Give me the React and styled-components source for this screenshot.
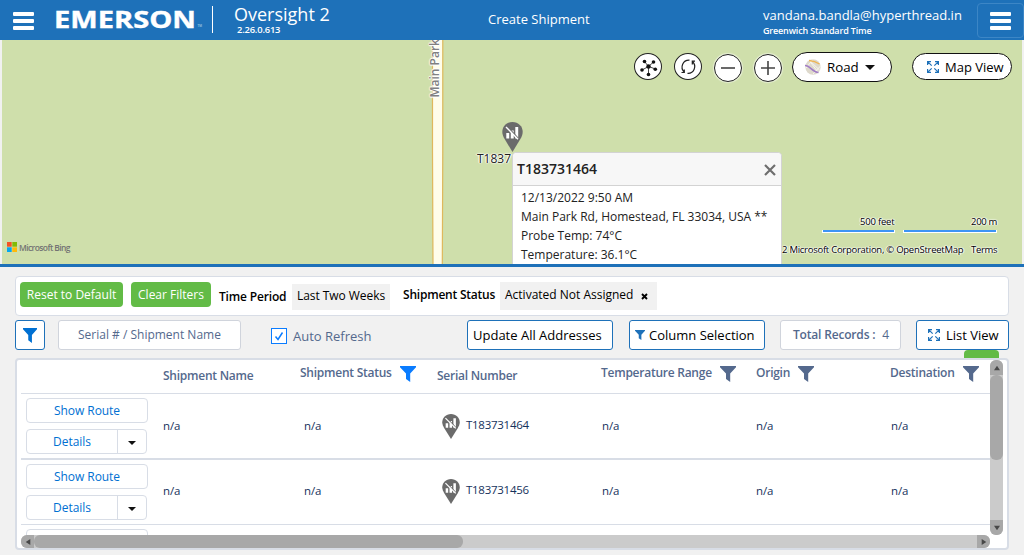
import React from "react";
import styled, { createGlobalStyle } from "styled-components";

const Global = createGlobalStyle`
  * { box-sizing: border-box; }
  html, body { margin: 0; height: 100%; overflow: hidden; background: #f1f1f1; }
  body { font-family: "Open Sans", "Noto Sans", sans-serif; font-size: 13px; color: #000; }
`;

const Page = styled.div`
  width: 1024px;
  height: 555px;
  display: flex;
  flex-direction: column;
  overflow: hidden;
`;

const Text = styled.span`
  display: block;
  flex: none;
  white-space: nowrap;
  font-size: ${(p) => p.$size || 13}px;
  font-weight: ${(p) => p.$weight || 400};
  letter-spacing: ${(p) => p.$ls || 0}px;
  line-height: ${(p) => p.$lh || 18}px;
  color: ${(p) => p.$color || "inherit"};
`;

/* ---------- header ---------- */

const Header = styled.header`
  height: 40px;
  flex: none;
  display: flex;
  align-items: flex-start;
  background: #1e71b9;
  color: #fff;
`;

const Burger = styled.span`
  display: flex;
  flex-direction: column;
  gap: 3px;
  width: 21px;
  i { display: block; height: 4px; border-radius: 1px; background: #fff; }
`;

const MenuButton = styled.div`
  flex: none;
  margin: 12px 0 0 13px;
  width: 42px;
`;

const Logo = styled.svg`
  width: 149px;
  height: 40px;
  flex: none;
`;

const Divider = styled.div`
  flex: none;
  width: 1px;
  height: 27px;
  margin: 6px 0 0 8px;
  background: #fff;
`;

const Product = styled.div`
  flex: none;
  width: 254px;
  padding: 2px 0 0 21px;
`;

const Version = styled.div`
  margin: -1px 0 0 3px;
`;

const PageTitle = styled.div`
  flex: none;
  width: 296px;
  padding: 10px 0 0 21px;
`;

const Account = styled.div`
  flex: none;
  width: 214px;
  padding-top: 6px;
`;

const AccountMenu = styled.div`
  flex: none;
  width: 47px;
  height: 35px;
  margin-top: 3px;
  border: 1px solid #3c86c6;
  border-radius: 4px;
  padding: 8px 0 0 12px;
`;

/* ---------- map ---------- */

const MapPane = styled.section`
  position: relative;
  flex: none;
  height: 224px;
  margin: 0 2px;
  overflow: hidden;
  background: #cfdfab;
`;

const MapBorder = styled.div`
  flex: none;
  height: 3px;
  background: #1e71b9;
`;

const Placed = styled.div`
  position: absolute;
  left: ${(p) => p.$x}px;
  top: ${(p) => p.$y}px;
`;

const RoadLine = styled.svg`
  position: absolute;
  left: 426px;
  top: 0;
`;

const RoadName = styled(Placed)`
  writing-mode: vertical-rl;
  transform: rotate(180deg);
  text-shadow: 0 0 2px #fff, 0 0 2px #fff, 0 0 1px #fff, 1px 0 1px #fff, -1px 0 1px #fff;
`;

const Halo = styled.div`
  text-shadow: 0 0 2px #fff, 0 0 2px #fff, 1px 0 1px #fff, -1px 0 1px #fff;
`;

const MapControls = styled.div`
  position: absolute;
  left: 632px;
  top: 12px;
  display: flex;
  align-items: flex-start;
`;

const RoundButton = styled.div`
  flex: none;
  width: 28px;
  height: ${(p) => (p.$glow ? 28 : 27)}px;
  margin: ${(p) => (p.$glow ? 2 : 1)}px 12px 0 0;
  border: 1px solid #222;
  border-radius: 50%;
  background: #fff;
  box-shadow: ${(p) => (p.$glow ? "0 0 1px 1px rgba(255,255,255,.5)" : "none")};
  svg { display: block; }
`;

const Pill = styled.div`
  display: flex;
  flex: none;
  align-items: center;
  gap: ${(p) => p.$gap}px;
  width: 100px;
  height: ${(p) => p.$h}px;
  margin: ${(p) => p.$m};
  padding-left: ${(p) => p.$pl}px;
  border: 1px solid #111;
  border-radius: 15px;
  background: #fff;
`;

const Caret = styled.span`
  display: block;
  flex: none;
  width: 0;
  height: 0;
  border: ${(p) => p.$s || 5}px solid transparent;
  border-top-color: #111;
  border-bottom: 0;
`;

const InfoBox = styled.div`
  position: absolute;
  left: 510px;
  top: 112px;
  width: 270px;
  height: 140px;
  border: 1px solid #d3d3d3;
  border-radius: 4px;
  background: #fff;
  color: #222;
`;

const InfoHead = styled.div`
  display: flex;
  justify-content: space-between;
  height: 33px;
  padding: 7px 5px 0 4px;
  border-bottom: 1px solid #d3d3d3;
  border-radius: 4px 4px 0 0;
  background: #f7f7f7;
  svg { margin-top: 4px; }
`;

const InfoBody = styled.div`
  padding: 2px 0 0 8px;
`;

const ScaleBar = styled.div`
  width: ${(p) => p.$w}px;
  height: 3px;
  border: 1px solid #fff;
  border-top-width: 0;
  background: #3d94f5;
`;

/* ---------- filters and toolbar ---------- */

const FilterBar = styled.div`
  flex: none;
  display: flex;
  align-items: flex-start;
  height: 40px;
  margin: 9px 15px 0;
  padding: 5px 0 0 4px;
  border: 1px solid #d8dde6;
  border-radius: 4px;
  background: #fff;
`;

const GreenButton = styled.div`
  display: flex;
  justify-content: center;
  align-items: center;
  width: ${(p) => p.$w}px;
  height: 25px;
  margin-right: 8px;
  border-radius: 4px;
  background: #62bb46;
  color: #fff;
`;

const FilterLabel = styled.div`
  width: ${(p) => p.$w}px;
  padding-top: ${(p) => p.$pt}px;
`;

const Tag = styled.div`
  display: flex;
  align-items: center;
  gap: 8px;
  width: ${(p) => p.$w}px;
  height: ${(p) => p.$h}px;
  margin: ${(p) => p.$m};
  padding: 0 0 2px 5px;
  background: #f1f1f1;
  svg { margin-top: 3px; }
`;

const Toolbar = styled.div`
  flex: none;
  display: flex;
  height: 30px;
  margin: 4px 15px 0;
`;

const Box = styled.div`
  display: flex;
  flex: none;
  align-items: center;
  gap: ${(p) => p.$gap || 0}px;
  width: ${(p) => p.$w}px;
  height: 30px;
  margin-right: ${(p) => p.$mr || 0}px;
  padding-left: ${(p) => p.$pl || 0}px;
  border: 1px solid ${(p) => (p.$plain ? "#d0d4dc" : "#1e71b9")};
  border-radius: 3px;
  background: #fff;
`;

const CheckField = styled.div`
  display: flex;
  flex: none;
  width: 196px;
  gap: 6px;
  padding-top: 8px;
`;

const CheckBox = styled.div`
  width: 16px;
  height: 16px;
  border: 1px solid #0a7cff;
  background: #fff;
  svg { display: block; }
`;

const GreenTab = styled.div`
  flex: none;
  width: 35px;
  height: 8px;
  margin-left: 964px;
  border-radius: 4px 4px 0 0;
  background: #62bb46;
`;

/* ---------- grid ---------- */

const TableFrame = styled.div`
  flex: none;
  display: grid;
  grid-template-columns: 969px 13px;
  grid-template-rows: 175px 13px;
  width: 994px;
  height: 192px;
  margin-left: 15px;
  padding-left: 4px;
  border: 2px solid #d8dde6;
  border-radius: 4px;
  background: #fff;
`;

const Rows = styled.div`
  overflow: hidden;
`;

const columns = "142px 137px 137px 164px 155px 134px 100px";

const HeadRow = styled.div`
  display: grid;
  grid-template-columns: ${columns};
  height: 34px;
  border-bottom: 1px solid #d8dde6;
  color: #54698d;
`;

const HeadCell = styled.div`
  display: flex;
  gap: 8px;
  padding-top: ${(p) => (p.$filter ? 4 : 7)}px;
  svg { margin-top: 2px; }
`;

const Row = styled.div`
  display: grid;
  grid-template-columns: ${columns};
  height: ${(p) => (p.$thick ? 66 : 65)}px;
  border-bottom: ${(p) => (p.$thick ? 2 : 1)}px solid #d8dde6;
  color: #16325c;
`;

const Actions = styled.div`
  display: flex;
  flex-direction: column;
  gap: 6px;
  padding: 4px 0 0 5px;
`;

const RowButton = styled.div`
  display: flex;
  flex: none;
  align-items: center;
  justify-content: center;
  width: 122px;
  height: 25px;
  border: 1px solid #d8dde6;
  border-radius: 4px;
  color: #0070d2;
`;

const SplitButton = styled.div`
  display: flex;
  flex: none;
  width: 121px;
  height: 25px;
  border: 1px solid #d8dde6;
  border-radius: 4px;
  color: #0070d2;
  > div { display: flex; align-items: center; justify-content: center; }
  > div:first-child { width: 91px; border-right: 1px solid #d8dde6; }
  > div:last-child { flex: 1; padding-top: 3px; }
`;

const Cell = styled.div`
  display: flex;
  gap: 6px;
  padding: ${(p) => p.$pt || 23}px 0 0 ${(p) => p.$pl || 0}px;
`;

const VBar = styled.div`
  display: flex;
  flex-direction: column;
  border-radius: 6px;
  overflow: hidden;
  background: #cbcbcb;
  > i:nth-child(2) { height: 85px; background: #a8a8a8; border-radius: 6px; margin-bottom: auto; }
`;

const HBar = styled.div`
  display: flex;
  border-radius: 6px;
  overflow: hidden;
  background: #cbcbcb;
  > i:nth-child(2) { width: 429px; background: #a8a8a8; border-radius: 6px; margin-right: auto; }
`;

const Arrow = styled.span`
  display: flex;
  flex: none;
  align-items: center;
  justify-content: center;
  width: 13px;
  height: ${(p) => p.$h || 13}px;
  background: #a8a8a8;
  svg { transform: rotate(${(p) => p.$r || 0}deg); }
`;

const ScrollArrow = ({ r, h }) => (
  <Arrow $r={r} $h={h}>
    <svg width="8" height="6" viewBox="0 0 8 6"><path d="M1 5.3 4 .7 7 5.3Z" fill="#484848" /></svg>
  </Arrow>
);

const Bars = () => <Burger><i /><i /><i /></Burger>;

const Funnel = ({ w = 16, h = 16, color }) => (
  <svg width={w} height={h} viewBox="0 0 16 16" preserveAspectRatio="none">
    <path d="M0 0H16V1.2L10.2 7.5V16L6 13V7.5L0 1.2Z" fill={color} />
  </svg>
);

const Expand = () => (
  <svg width="12" height="12" viewBox="0 0 12 12" fill="none" stroke="#1e71b9" strokeWidth="1.2">
    <path d="M.6 4V.6H4M8 .6h3.4V4M11.4 8v3.4H8M4 11.4H.6V8M.8.8l3.9 3.9M11.2.8 7.3 4.7M11.2 11.2 7.3 7.3M.8 11.2l3.9-3.9" />
  </svg>
);

const Pin = ({ w, h }) => (
  <svg width={w} height={h} viewBox="0 0 21 30" preserveAspectRatio="none">
    <path d="M10.5 0C4.6 0 .3 4.4.3 10c0 2.5 1 4.8 2.2 6.8L10.5 30l8-13.2c1.2-2 2.2-4.3 2.2-6.8C20.7 4.4 16.4 0 10.5 0Z" fill="#6b6b6b" />
    <path d="M4.300 11h2.900v5.500H4.300ZM8.800 8.400h2.900v8.100H8.800ZM13.300 5h2.900v11.500h-2.900Z" fill="#fff" />
    <path d="M5.300 4.700 17.300 17.400" stroke="#6b6b6b" strokeWidth="1.300" />
    <path d="M4 5 16 17.300" stroke="#fff" strokeWidth="1.400" />
  </svg>
);

const rows = [
  { serial: "T183731464", thick: true },
  { serial: "T183731456", thick: false },
];

const heads = [
  { label: "Shipment Name" },
  { label: "Shipment Status", filter: "#0a7cff" },
  { label: "Serial Number" },
  { label: "Temperature Range", filter: "#54698d" },
  { label: "Origin", filter: "#54698d" },
  { label: "Destination", filter: "#54698d" },
];

const NA = ({ pl, pt }) => <Cell $pl={pl} $pt={pt}><Text $size={11.5} $ls={-0.1}>n/a</Text></Cell>;

const TableRow = ({ serial, thick }) => (
  <Row $thick={thick}>
    <Actions>
      <RowButton><Text $size={12} $ls={-0.05}>Show Route</Text></RowButton>
      <SplitButton>
        <div><Text $size={12} $ls={-0.05}>Details</Text></div>
        <div><Caret $s={4} /></div>
      </SplitButton>
    </Actions>
    <NA pt={thick ? 23 : 22} />
    <NA pt={thick ? 23 : 22} pl={4} />
    <Cell $pl={5} $pt={thick ? 20 : 19}>
      <Pin w={18} h={25} />
      <Text $size={11.5} $ls={-0.27} $lh={22}>{serial}</Text>
    </Cell>
    <NA pt={thick ? 23 : 22} pl={1} />
    <NA pt={thick ? 23 : 22} />
    <NA pt={thick ? 23 : 22} pl={1} />
  </Row>
);

export default function App() {
  return (
    <Page>
      <Global />
      <Header>
        <MenuButton><Bars /></MenuButton>
        <Logo viewBox="0 0 149 40">
          <text x="-1" y="27.500" fill="#fff" fontSize="23.500" fontWeight="700" stroke="#fff" strokeWidth=".4" textLength="142" lengthAdjust="spacingAndGlyphs">EMERSON</text>
          <text x="142.500" y="27" fill="#cfe0f0" fontSize="3">TM</text>
        </Logo>
        <Divider />
        <Product>
          <Text $size={18} $lh={24}>Oversight 2</Text>
          <Version><Text $size={9.4} $lh={10} $weight={600} $ls={-0.2}>2.26.0.613</Text></Version>
        </Product>
        <PageTitle><Text $size={13}>Create Shipment</Text></PageTitle>
        <Account>
          <Text $size={13}>vandana.bandla@hyperthread.in</Text>
          <Text $size={9} $lh={13} $weight={600} $ls={-0.17}>Greenwich Standard Time</Text>
        </Account>
        <AccountMenu><Bars /></AccountMenu>
      </Header>

      <MapPane>
        <RoadLine width="20" height="224">
          <path d="M5 0H14.500L14 224H5Z" fill="#fffdea" />
          <path d="M4.500 0V110L5 224M14.800 0V110L14.300 224" fill="none" stroke="#dfb85c" strokeWidth="1.200" />
        </RoadLine>
        <RoadName $x={424} $y={-1}>
          <Text $size={12} $weight={600} $color="#808080">Main Park</Text>
        </RoadName>
        <Placed $x={499.5} $y={82}><Pin w={21} h={30} /></Placed>
        <Placed $x={475} $y={110}><Halo><Text $size={12} $color="#222">T1837</Text></Halo></Placed>

        <MapControls>
          <RoundButton>
            <svg width="26" height="26" viewBox="0 0 26 26">
              <path d="M13.500 12.500 9.500 7.500M13.500 12.500l5-4.500M13.500 12.500l7 2.500M13.500 12.500v8M13.500 12.500 7 16" stroke="#333" strokeWidth=".9" />
              <g fill="#111">
                <circle cx="13.500" cy="12.500" r="2.200" /><circle cx="9.500" cy="7.500" r="1.800" /><circle cx="18.500" cy="8" r="1.800" />
                <circle cx="20.300" cy="15.300" r="1.800" /><circle cx="13.500" cy="20.500" r="1.800" /><circle cx="7" cy="16" r="1.800" />
              </g>
            </svg>
          </RoundButton>
          <RoundButton>
            <svg width="26" height="26" viewBox="0 0 26 26" fill="none" stroke="#222" strokeWidth="1.200">
              <path d="M14.500 6.200C8 5.800 4.500 13.500 9.300 18.200M12.500 19.300C19 19.700 22.200 12 17.300 7.300M17.300 10.500V7.200H20M9.300 15.500v3H6.500" />
            </svg>
          </RoundButton>
          <RoundButton $glow>
            <svg width="26" height="26"><path d="M6 13H20" stroke="#444" strokeWidth="1.600" /></svg>
          </RoundButton>
          <RoundButton $glow>
            <svg width="26" height="26"><path d="M6 13H20M13 6V20" stroke="#444" strokeWidth="1.600" /></svg>
          </RoundButton>
          <Pill $h={30} $m="0 20px 0 -2px" $pl={12} $gap={6}>
            <svg width="16" height="16" viewBox="0 0 16 16">
              <circle cx="8" cy="8" r="7.700" fill="#ded9cc" />
              <path d="M4 1 14.500 11M1 9 8 .5M8 15 15.500 7M6 4l7 9" stroke="#f8f5ec" strokeWidth="1" />
              <path d="M4 1.500Q10 2 14.500 5" fill="none" stroke="#efb553" strokeWidth="1.400" />
              <path d="M0 6.500C5 6 7 13 13.500 13.500" fill="none" stroke="#a07cc5" strokeWidth="1.600" />
            </svg>
            <Text $size={13.3} $lh={20}>Road</Text>
            <Caret />
          </Pill>
          <Pill $h={27} $m="1px 0 0 0" $pl={14} $gap={6}>
            <Expand />
            <Text $size={13}>Map View</Text>
          </Pill>
        </MapControls>

        <Placed $x={5} $y={202}>
          <svg width="10" height="10" display="block">
            <path d="M0 0H4.700V4.700H0Z" fill="#f35325" /><path d="M5.300 0H10V4.700H5.300Z" fill="#81bc06" />
            <path d="M0 5.300H4.700V10H0Z" fill="#05a6f0" /><path d="M5.300 5.300H10V10H5.300Z" fill="#ffba08" />
          </svg>
        </Placed>
        <Placed $x={17} $y={202}><Text $size={8.5} $lh={12} $weight={600} $color="#737373" $ls={-0.6}>Microsoft Bing</Text></Placed>

        <Placed $x={858} $y={175}><Halo><Text $size={9.5} $lh={14} $ls={-0.2}>500 feet</Text></Halo></Placed>
        <Placed $x={969} $y={175}><Halo><Text $size={9.5} $lh={14} $ls={-0.3}>200 m</Text></Halo></Placed>
        <Placed $x={820} $y={190}><ScaleBar $w={73} /></Placed>
        <Placed $x={901} $y={190}><ScaleBar $w={94} /></Placed>
        <Placed $x={780} $y={203}><Halo><Text $size={9.5} $lh={14} $ls={-0.26}>2 Microsoft Corporation, © OpenStreetMap</Text></Halo></Placed>
        <Placed $x={969} $y={203}><Halo><Text $size={9.5} $lh={14} $ls={-0.3}>Terms</Text></Halo></Placed>

        <InfoBox>
          <InfoHead>
            <Text $size={14} $weight={600}>T183731464</Text>
            <svg width="12" height="12" viewBox="0 0 12 12"><path d="M1 1 11 11M11 1 1 11" stroke="#6e6e6e" strokeWidth="2.200" /></svg>
          </InfoHead>
          <InfoBody>
            <Text $size={12} $lh={19}>12/13/2022 9:50 AM</Text>
            <Text $size={12} $lh={19}>Main Park Rd, Homestead, FL 33034, USA **</Text>
            <Text $size={12} $lh={19}>Probe Temp: 74°C</Text>
            <Text $size={12} $lh={19}>Temperature: 36.1°C</Text>
          </InfoBody>
        </InfoBox>
      </MapPane>
      <MapBorder />

      <FilterBar>
        <GreenButton $w={103}><Text $size={12}>Reset to Default</Text></GreenButton>
        <GreenButton $w={80}><Text $size={12}>Clear Filters</Text></GreenButton>
        <FilterLabel $w={73} $pt={6}><Text $size={12} $weight={600} $ls={-0.17}>Time Period</Text></FilterLabel>
        <Tag $w={98} $h={26} $m="2px 13px 0 0"><Text $size={12} $ls={-0.05}>Last Two Weeks</Text></Tag>
        <FilterLabel $w={97} $pt={4}><Text $size={12} $weight={600} $ls={-0.22}>Shipment Status</Text></FilterLabel>
        <Tag $w={157} $h={28} $m="0">
          <Text $size={12}>Activated Not Assigned</Text>
          <svg width="7" height="7"><path d="M1 1 6 6M6 1 1 6" stroke="#000" strokeWidth="1.900" /></svg>
        </Tag>
      </FilterBar>

      <Toolbar>
        <Box $w={30} $mr={13} $pl={7}><Funnel w={14} h={15} color="#0070d2" /></Box>
        <Box $w={183} $mr={30} $pl={19} $plain><Text $size={12} $color="#54698d">Serial # / Shipment Name</Text></Box>
        <CheckField>
          <CheckBox><svg width="14" height="14"><path d="M3.500 7.500 6 10.500 10.500 3.500" fill="none" stroke="#0a7cff" strokeWidth="1.500" /></svg></CheckBox>
          <Text $size={13} $lh={16} $color="#54698d">Auto Refresh</Text>
        </CheckField>
        <Box $w={146} $mr={16} $pl={5}><Text $size={13}>Update All Addresses</Text></Box>
        <Box $w={136} $mr={15} $pl={5} $gap={4}><Funnel w={10} h={10} color="#1e71b9" /><Text $size={13}>Column Selection</Text></Box>
        <Box $w={121} $mr={15} $pl={12} $gap={7} $plain>
          <Text $size={12} $weight={600} $ls={-0.18} $color="#54698d">Total Records :</Text>
          <Text $size={12} $color="#54698d">4</Text>
        </Box>
        <Box $w={93} $pl={11} $gap={6}><Expand /><Text $size={13}>List View</Text></Box>
      </Toolbar>
      <GreenTab />

      <TableFrame>
        <Rows>
          <HeadRow>
            <div />
            {heads.map((h) => (
              <HeadCell key={h.label} $filter={!!h.filter}>
                <Text $size={12} $weight={600} $ls={-0.25}>{h.label}</Text>
                {h.filter && <Funnel color={h.filter} />}
              </HeadCell>
            ))}
          </HeadRow>
          {rows.map((r) => <TableRow key={r.serial} {...r} />)}
          <Actions><RowButton /></Actions>
        </Rows>
        <VBar><ScrollArrow h={15} /><i /><ScrollArrow r={180} h={15} /></VBar>
        <HBar><ScrollArrow r={270} /><i /><ScrollArrow r={90} /></HBar>
      </TableFrame>
    </Page>
  );
}
